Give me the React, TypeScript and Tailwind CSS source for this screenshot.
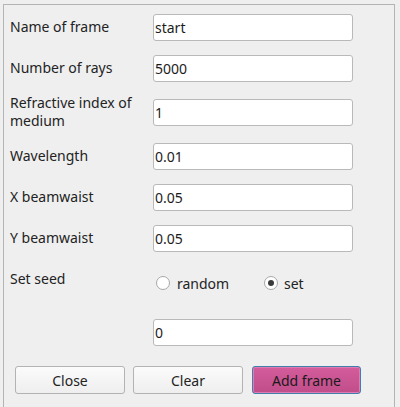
import React from 'react';

const fields = [
  { label: 'Name of frame', value: 'start', mt: 'mt-[9px]' },
  { label: 'Number of rays', value: '5000', mt: 'mt-[14px]' },
  { label: 'Refractive index of medium', value: '1', mt: 'mt-[17px]' },
  { label: 'Wavelength', value: '0.01', mt: 'mt-[17px]' },
  { label: 'X beamwaist', value: '0.05', mt: 'mt-[14px]' },
  { label: 'Y beamwaist', value: '0.05', mt: 'mt-[14px]' },
];

const TextBox: React.FC<{ value: string }> = ({ value }) => (
  <div className="w-[200px] h-[27px] flex items-center pl-[1px] bg-white border border-[#b9b9b9] rounded-[3px] text-[#1c1c1c]">
    {value}
  </div>
);

const Radio: React.FC<{ checked?: boolean }> = ({ checked }) => (
  <span className="w-[14px] h-[14px] rounded-full border border-[#a8a8a8] bg-white flex items-center justify-center">
    {checked && <span className="w-[6px] h-[6px] rounded-full bg-[#3a3a3a]" />}
  </span>
);

const App: React.FC = () => {
  return (
    <div
      className="w-[400px] h-[407px] bg-[#efefef] pt-[4px] pl-[3px] overflow-hidden text-[14px] text-[#232323]"
      style={{ fontFamily: '"Noto Sans", "Open Sans", sans-serif' }}
    >
      <div className="w-[392px] h-[420px] border-l border-t border-r border-[#b4b4b4] pl-[6px] flex flex-col">
        {fields.map((f) => (
          <div key={f.label} className={`flex items-center h-[27px] ${f.mt}`}>
            <div className="w-[143px] leading-[18px] pr-2 -mt-[1px]">{f.label}</div>
            <TextBox value={f.value} />
          </div>
        ))}

        <div className="flex mt-[18px]">
          <div className="w-[143px] leading-[18px]">Set seed</div>
          <div className="flex flex-col pt-[4px]">
            <div className="flex items-center h-[18px] pl-[3px]">
              <div className="w-[108px] flex items-center gap-[7px]">
                <Radio />
                <span>random</span>
              </div>
              <div className="flex items-center gap-[6px]">
                <Radio checked />
                <span>set</span>
              </div>
            </div>
            <div className="mt-[27px]">
              <TextBox value="0" />
            </div>
          </div>
        </div>

        <div className="flex gap-[8px] mt-[20px] pl-[5px]">
          <button className="w-[110px] h-[28px] rounded-[3px] border border-[#b3b3b3] bg-gradient-to-b from-[#fbfbfb] to-[#eeeeee] text-[#232323]">
            Close
          </button>
          <button className="w-[110px] h-[28px] rounded-[3px] border border-[#b3b3b3] bg-gradient-to-b from-[#fbfbfb] to-[#eeeeee] text-[#232323]">
            Clear
          </button>
          <button className="w-[109px] h-[28px] ml-[1px] rounded-[3px] border border-[#3f7fae] bg-gradient-to-b from-[#d45c9c] to-[#c04e8a] text-[#1a1a1a] shadow-[inset_0_0_0_1px_#e07ab2]">
            Add frame
          </button>
        </div>
      </div>
    </div>
  );
};

export default App;
